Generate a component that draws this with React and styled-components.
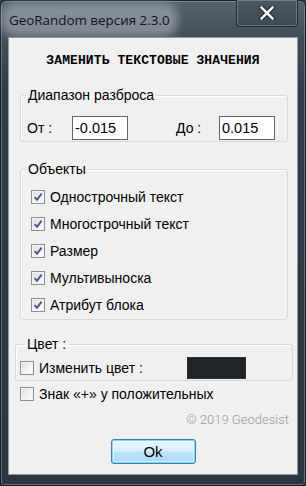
import React from 'react';
import styled, { createGlobalStyle } from 'styled-components';

const GlobalStyle = createGlobalStyle`
    html, body {
        margin: 0;
        padding: 0;
        background: #2b3744;
    }
    * {
        box-sizing: border-box;
    }
`;

const Window = styled.div`
    display: flex;
    flex-direction: column;
    width: 306px;
    height: 486px;
    border: 1px solid #161e26;
    border-radius: 6px 6px 4px 4px;
    background: linear-gradient(180deg, #56626e 0px, #44505c 30px, #313d4a 90px, #2a3642 100%);
    box-shadow: inset 0 0 0 1px rgba(190, 205, 220, 0.35);
    font-family: 'Liberation Sans', Arial, sans-serif;
`;

const TitleBar = styled.div`
    display: flex;
    justify-content: space-between;
    align-items: flex-start;
    height: 36px;
    padding: 0 7px 0 6px;
`;

const Caption = styled.span`
    margin-top: 8px;
    padding: 1px 2px;
    font-family: 'Open Sans', 'Noto Sans', sans-serif;
    font-size: 13.4px;
    line-height: 20px;
    color: #101418;
    background: rgba(176, 186, 196, 0.55);
    border-radius: 8px;
    box-shadow: 0 0 10px 6px rgba(176, 186, 196, 0.55);
`;

const CloseButton = styled.div`
    display: flex;
    align-items: center;
    justify-content: center;
    width: 62px;
    height: 27px;
    margin-top: -1px;
    border: 1px solid #202a33;
    border-top: none;
    border-radius: 0 0 4px 4px;
    background: linear-gradient(180deg, #4b5763 0%, #3c4854 100%);
    box-shadow: inset 0 0 0 1px rgba(170, 185, 200, 0.4);
`;

const Client = styled.div`
    display: flex;
    flex-direction: column;
    flex: 1;
    margin: 0 7px 10px 7px;
    border: 1px solid #8d99a5;
    background: #f0f0f0;
    color: #000;
    font-size: 14px;
`;

const Heading = styled.div`
    margin-top: 15px;
    text-align: center;
    font-family: 'Liberation Mono', 'DejaVu Sans Mono', monospace;
    font-weight: 700;
    font-size: 13px;
    line-height: 16px;
    letter-spacing: 0.1px;
    color: #000;
`;

const Group = styled.fieldset`
    margin: ${({ $top }) => $top}px ${({ $right }) => $right}px 0 ${({ $left }) => $left}px;
    padding: ${({ $pad }) => $pad};
    min-width: 0;
    border: 1px solid #d5dadd;
    border-radius: 3px;
    box-shadow: inset 1px 1px 0 #fff;
`;

const Legend = styled.legend`
    margin-left: 5px;
    padding: 0 2px;
    font-size: 14px;
    line-height: 18px;
    color: #000;
`;

const FieldRow = styled.div`
    display: flex;
    align-items: center;
    padding-left: 6px;
`;

const FieldLabel = styled.span`
    width: ${({ $width }) => $width}px;
    line-height: 24px;
`;

const Input = styled.div`
    width: 56px;
    height: 24px;
    padding: 1px 2px;
    border: 1px solid #646464;
    background: #fff;
    line-height: 20px;
    font-size: 14.5px;
`;

const CheckList = styled.div`
    display: flex;
    flex-direction: column;
    padding-left: 10px;
`;

const CheckRow = styled.label`
    display: flex;
    align-items: center;
    gap: 5px;
    height: ${({ $height }) => $height || 27}px;
    margin: ${({ $margin }) => $margin || '0'};
    line-height: 18px;
`;

const Box = styled.span`
    display: flex;
    align-items: center;
    justify-content: center;
    flex: none;
    width: 14px;
    height: 14px;
    border: 1px solid #8e8f8f;
    background: linear-gradient(135deg, #dcdcdc 0%, #f4f4f4 60%, #ffffff 100%);
    box-shadow: inset 0 0 0 1px #f4f4f4;
`;

const ColorText = styled.span`
    width: 143px;
`;

const Swatch = styled.div`
    width: 59px;
    height: 22px;
    background: #1f2429;
    border: 1px solid #2c3136;
`;

const Copyright = styled.div`
    margin: 11px 8px 0 0;
    text-align: right;
    font-family: 'Roboto', 'Liberation Sans', sans-serif;
    font-weight: 300;
    font-size: 13px;
    line-height: 16px;
    color: #9a9a9a;
`;

const OkButton = styled.button`
    align-self: center;
    width: 85px;
    height: 25px;
    margin-top: 11px;
    padding: 0;
    border: 1px solid #3c7fb1;
    border-radius: 3px;
    background: linear-gradient(180deg, #e9f6fd 0%, #d9effc 48%, #bde5fb 52%, #a8daf6 100%);
    box-shadow: inset 0 0 0 1px #7fd7f6, inset 0 0 0 2px rgba(255, 255, 255, 0.5);
    font-family: 'Liberation Sans', Arial, sans-serif;
    font-size: 15px;
    color: #000;
`;

const CloseIcon = () => (
    <svg width="16" height="14" viewBox="0 0 16 14">
        <path d="M2.5 1.5 L13.5 12.5 M13.5 1.5 L2.5 12.5" stroke="#0d1218" strokeWidth="4.4" strokeLinecap="square" />
        <path d="M2.5 1.5 L13.5 12.5 M13.5 1.5 L2.5 12.5" stroke="#f2f4f6" strokeWidth="2.6" strokeLinecap="square" />
    </svg>
);

const Check = ({ checked }) => (
    <Box>
        {checked && (
            <svg width="10" height="10" viewBox="0 0 10 10">
                <path d="M1.6 5.2 L4 7.8 L8.6 1.6" fill="none" stroke="#41568c" strokeWidth="1.9" />
            </svg>
        )}
    </Box>
);

const objects = ['Однострочный текст', 'Многострочный текст', 'Размер', 'Мультивыноска', 'Атрибут блока'];

const App = () => (
    <>
        <GlobalStyle />
        <Window>
            <TitleBar>
                <Caption>GeoRandom версия 2.3.0</Caption>
                <CloseButton>
                    <CloseIcon />
                </CloseButton>
            </TitleBar>
            <Client>
                <Heading>ЗАМЕНИТЬ ТЕКСТОВЫЕ ЗНАЧЕНИЯ</Heading>

                <Group $top={17} $left={11} $right={9} $pad="12px 0 1px 0">
                    <Legend>Диапазон разброса</Legend>
                    <FieldRow>
                        <FieldLabel $width={45}>От :</FieldLabel>
                        <Input>-0.015</Input>
                        <FieldLabel $width={48} />
                        <FieldLabel $width={43}>До :</FieldLabel>
                        <Input>0.015</Input>
                    </FieldRow>
                </Group>

                <Group $top={18} $left={11} $right={9} $pad="5px 0 1px 0">
                    <Legend>Объекты</Legend>
                    <CheckList>
                        {objects.map(name => (
                            <CheckRow key={name}>
                                <Check checked />
                                {name}
                            </CheckRow>
                        ))}
                    </CheckList>
                </Group>

                <Group $top={15} $left={6} $right={4} $pad="4px 0 1px 4px">
                    <Legend>Цвет :</Legend>
                    <CheckRow $height={22}>
                        <Check />
                        <ColorText>Изменить цвет :</ColorText>
                        <Swatch />
                    </CheckRow>
                </Group>

                <CheckRow $height={14} $margin="6px 0 0 11px">
                    <Check />
                    Знак «+» у положительных
                </CheckRow>

                <Copyright>© 2019 Geodesist</Copyright>

                <OkButton>Ok</OkButton>
            </Client>
        </Window>
    </>
);

export default App;
